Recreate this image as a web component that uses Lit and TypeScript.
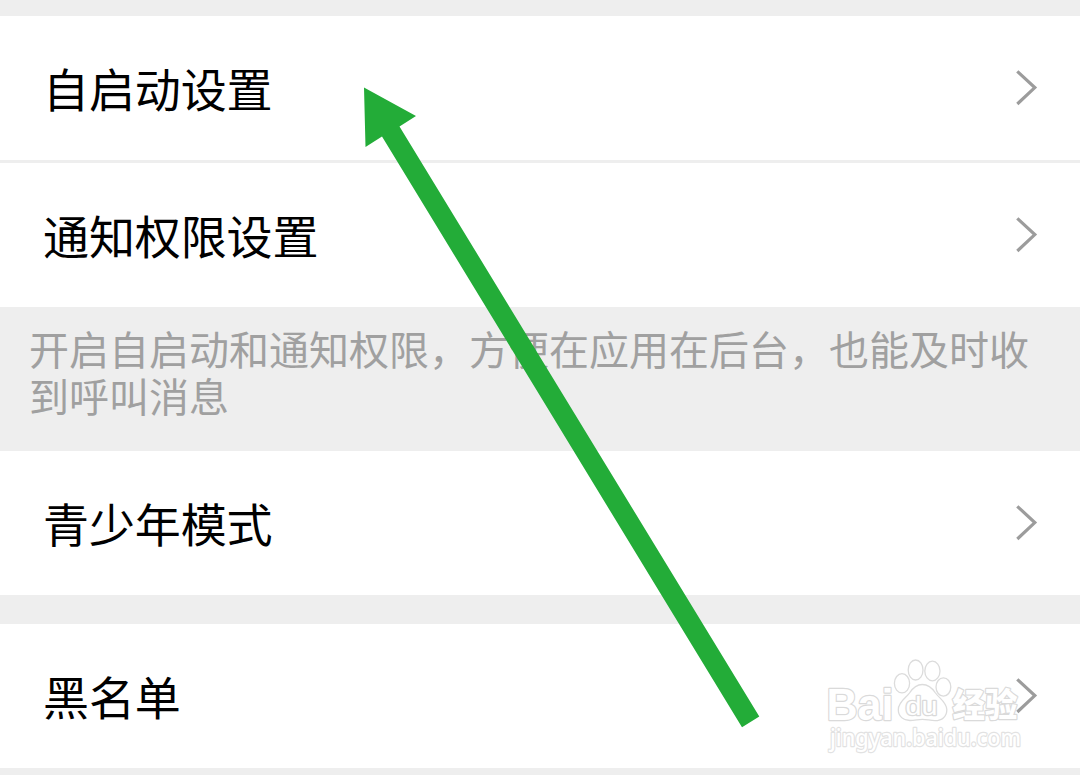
import { css, html, LitElement, svg } from "lit";
import { customElement, property } from "lit/decorators.js";

@customElement("settings-row")
export class SettingsRow extends LitElement {
  @property({ type: String })
  label = "";

  static styles = css`
    :host {
      display: flex;
      align-items: center;
      justify-content: space-between;
      box-sizing: border-box;
      height: 144px;
      padding: 0 42px 0 43px;
      background: #fff;
    }

    .label {
      font-size: 46px;
      line-height: 66px;
      color: #000;
      padding-bottom: 2px;
      letter-spacing: -0.1px;
      white-space: nowrap;
    }

    .chevron {
      display: block;
      width: 22px;
      height: 38px;
    }
  `;

  render() {
    return html`
      <span class="label">${this.label}</span>
      <svg class="chevron" viewBox="0 0 22 38">
        <path
          d="M1.3 2.3L18.8 18.6L1.3 35"
          fill="none"
          stroke="#9c9c9c"
          stroke-width="3.2"
        />
      </svg>
    `;
  }
}

@customElement("baidu-watermark")
export class BaiduWatermark extends LitElement {
  static styles = css`
    :host {
      display: block;
    }

    svg {
      display: block;
    }

    .outline {
      fill: #fff;
      stroke: #dadada;
      stroke-width: 2.4;
      stroke-linejoin: round;
      paint-order: stroke;
    }

    .shape {
      fill: #fff;
      stroke: #dcdcdc;
      stroke-width: 1.3;
    }

    .latin {
      font-family: "Liberation Sans", Arial, sans-serif;
      font-weight: 700;
    }

    .small {
      font-weight: 400;
    }

    .cjk {
      font-family: "Noto Sans CJK SC", sans-serif;
      font-weight: 900;
    }

    .url {
      font-family: "Noto Sans", "Open Sans", sans-serif;
      font-weight: 500;
      stroke: #e2e2e2;
    }
  `;

  render() {
    const toes = [
      [82, 43.3, 7.6, 9.6],
      [95.6, 30, 7.4, 10],
      [112.4, 31, 7.6, 9.8],
      [123.4, 47, 7.4, 9.2],
    ];
    return html`
      <svg width="210" height="120" viewBox="0 0 210 120">
        <text class="outline latin" x="6.5" y="79.5" font-size="45" textLength="67" lengthAdjust="spacingAndGlyphs">Bai</text>
        ${toes.map(
          ([cx, cy, rx, ry]) =>
            svg`<ellipse class="shape" cx=${cx} cy=${cy} rx=${rx} ry=${ry} />`,
        )}
        <path
          class="shape"
          d="M102.3 44.5C96 44.5 92.5 48.5 89.5 53C86 58 78.5 61.5 78.3 69.5C78.2 76.5 83.5 80.5 90 80.5C95 80.5 98 79.3 102.3 79.3C107 79.3 110 80.7 115 80.7C122 80.7 127 76.5 126.8 69.5C126.5 62 119 58 115.5 53C112.5 48.5 109 44.5 102.3 44.5Z"
        />
        <text class="outline latin small" x="85.5" y="74.5" font-size="25" textLength="32" lengthAdjust="spacingAndGlyphs">du</text>
        <text class="outline cjk" x="132.5" y="77" font-size="33.5" textLength="65" lengthAdjust="spacingAndGlyphs">经验</text>
        <text class="outline url" x="10" y="105.5" font-size="23" textLength="191" lengthAdjust="spacingAndGlyphs">jingyan.baidu.com</text>
      </svg>
    `;
  }
}

@customElement("app-root")
export class AppRoot extends LitElement {
  static styles = css`
    :host {
      display: block;
      position: relative;
      box-sizing: border-box;
      width: 1080px;
      height: 775px;
      padding-top: 16px;
      overflow: hidden;
      background: #eee;
      font-family: "Noto Sans CJK SC", sans-serif;
    }

    .group {
      display: flex;
      flex-direction: column;
      gap: 3px;
    }

    .group + .group {
      margin-top: 29px;
    }

    .note {
      box-sizing: border-box;
      height: 144px;
      margin: 0;
      padding: 18px 30px 0 29px;
      font-size: 40px;
      line-height: 47px;
      color: #a0a0a0;
    }

    .arrow {
      position: absolute;
      inset: 0;
    }

    .watermark {
      position: absolute;
      left: 820px;
      top: 640px;
    }
  `;

  render() {
    return html`
      <div class="group">
        <settings-row label="自启动设置"></settings-row>
        <settings-row label="通知权限设置"></settings-row>
      </div>
      <p class="note">
        开启自启动和通知权限，方便在应用在后台，也能及时收到呼叫消息
      </p>
      <div class="group">
        <settings-row label="青少年模式"></settings-row>
      </div>
      <div class="group">
        <settings-row label="黑名单"></settings-row>
      </div>
      <baidu-watermark class="watermark"></baidu-watermark>
      <svg class="arrow" width="1080" height="775" viewBox="0 0 1080 775">
        <path
          d="M364 87.5L416 116L399.5 126.5L759.3 716.5L742 727.3L382 136.5L365.5 147Z"
          fill="#23ac38"
        />
      </svg>
    `;
  }
}
